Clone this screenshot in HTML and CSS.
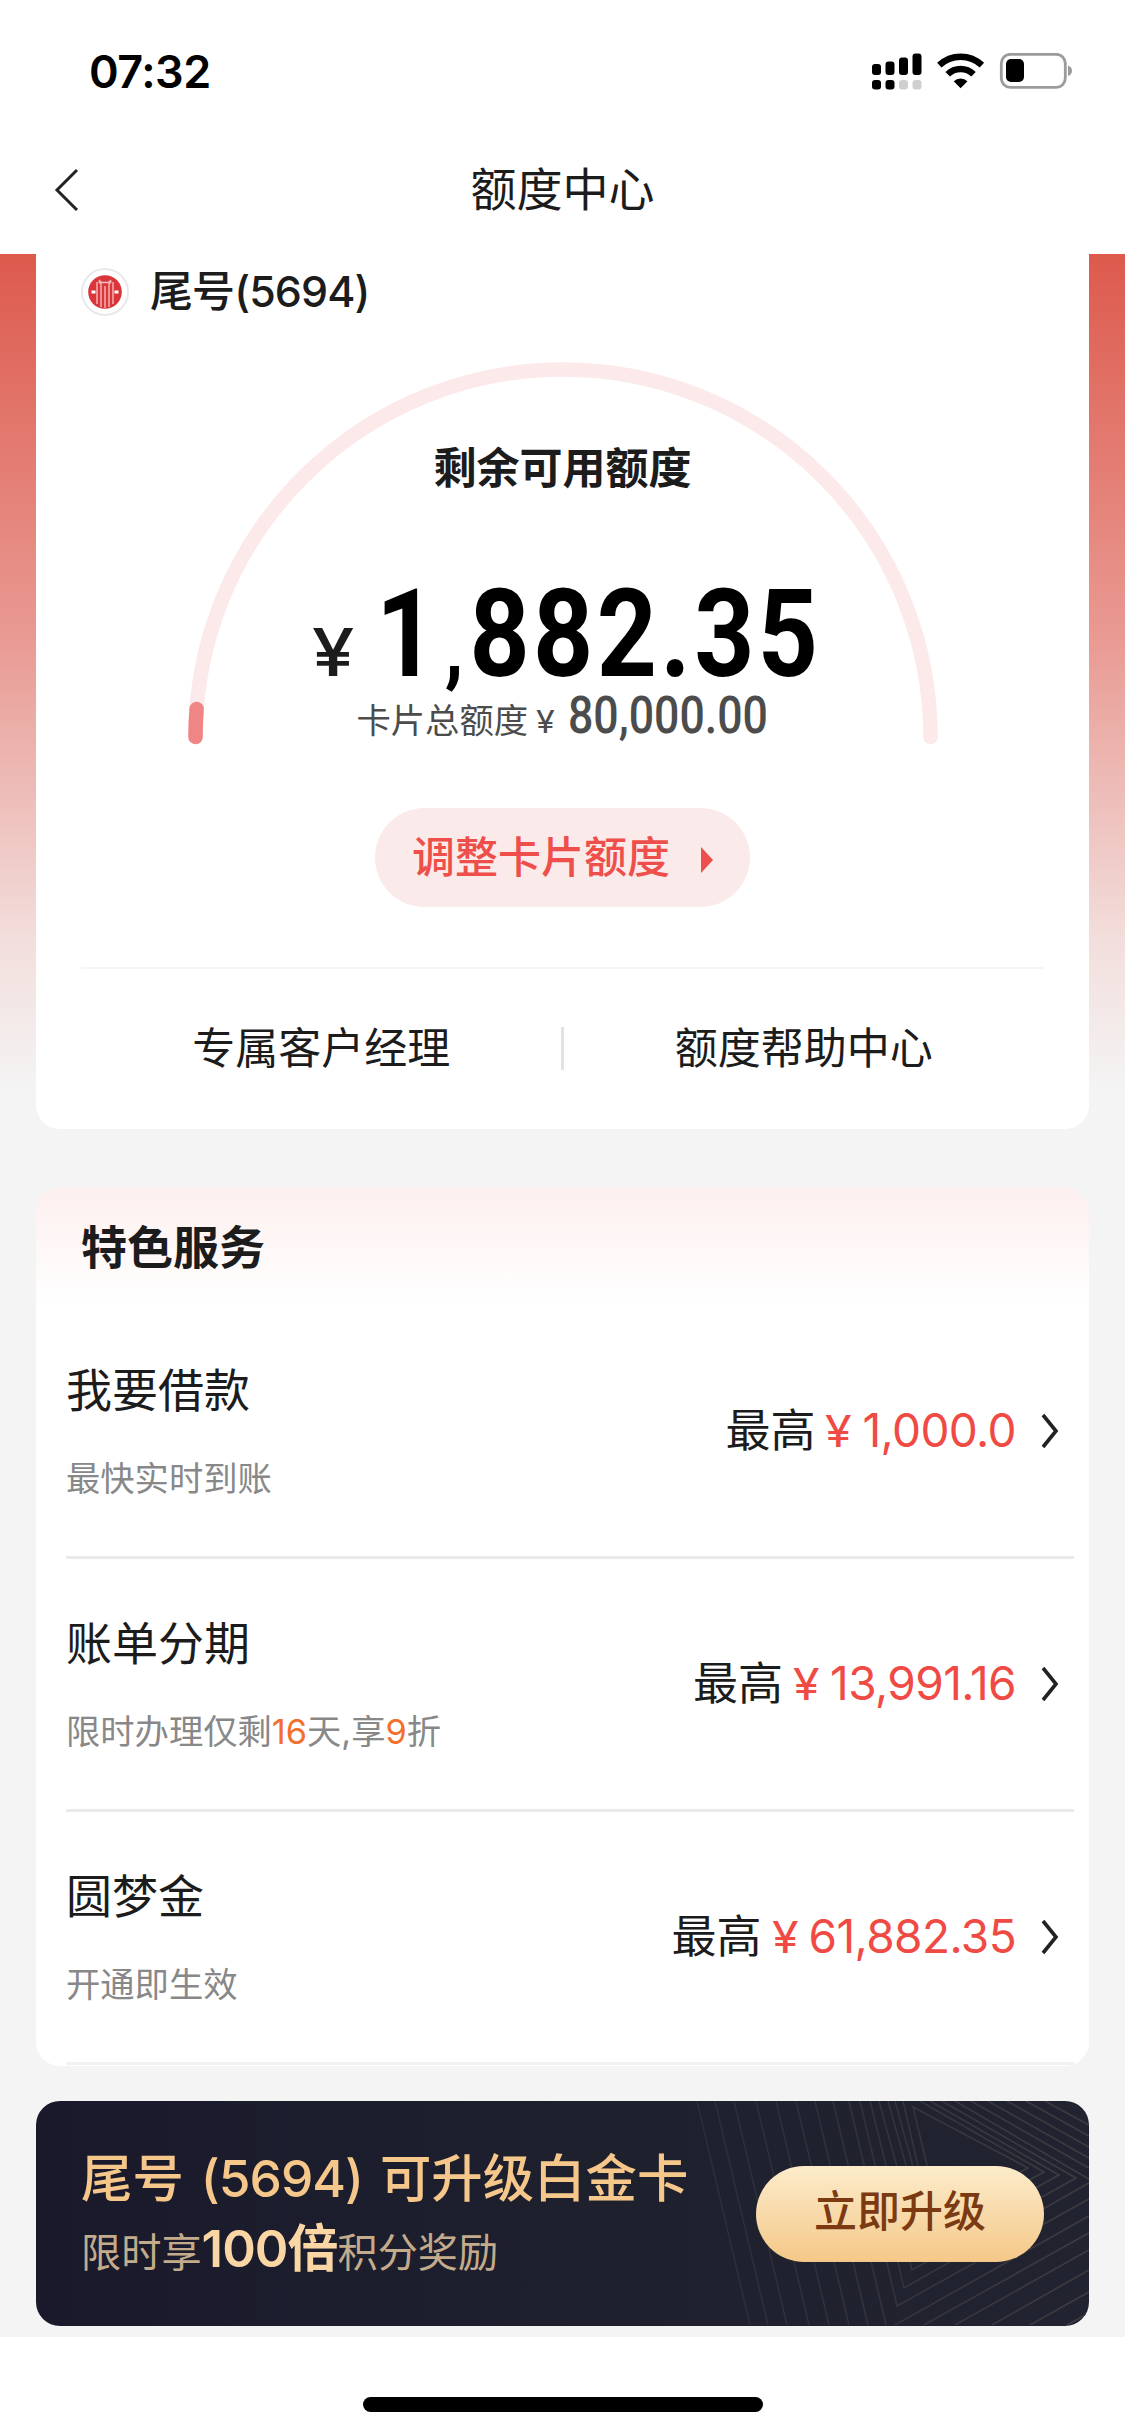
FILE: index.html
```html
<!DOCTYPE html>
<html lang="zh-CN">
<head>
<meta charset="utf-8">
<title>额度中心</title>
<link rel="stylesheet" href="styles.css">
</head>
<body>
<header class="top">
  <div class="status">
    <span class="time">07:32</span>
    <svg class="status-icons" width="204" height="40" viewBox="0 0 204 40">
      <rect x="0" y="11" width="9" height="11" rx="3"/><rect x="13.500" y="8.500" width="9" height="13.500" rx="3"/><rect x="27" y="4.500" width="9" height="17.500" rx="3"/><rect x="40.500" y="0.500" width="9" height="21.500" rx="3"/>
      <rect x="0" y="27" width="9" height="9.500" rx="3"/><rect x="13.500" y="27" width="9" height="9.500" rx="3"/>
      <rect x="27" y="27" width="9" height="9.500" rx="3" fill="#cfcfcf"/><rect x="40.500" y="27" width="9" height="9.500" rx="3" fill="#cfcfcf"/>
      <g fill="none" stroke="#000" stroke-width="6.400"><path d="M67.300 12.200a31 31 0 0 1 42.600 0"/><path d="M75.700 21.300a18.500 18.500 0 0 1 25.800 0"/></g>
      <path d="M88.600 35.200l-6.900-7a10 10 0 0 1 13.800 0z"/>
      <rect x="129.300" y="1.300" width="64" height="33" rx="9" fill="none" stroke="#9b9b9b" stroke-width="2.800"/>
      <rect x="134" y="6" width="18" height="23" rx="5"/>
      <path d="M196 12.500q4 1.500 4 5.300t-4 5.300z" fill="#9b9b9b"/>
    </svg>
  </div>
  <div class="navbar">
    <svg class="back" width="26" height="44" viewBox="0 0 26 44"><path d="M23 2L3 22L23 42" fill="none" stroke="#222" stroke-width="3"/></svg>
    <h1>额度中心</h1>
  </div>
</header>

<main>
  <section class="card quota">
    <div class="account">
      <svg width="48" height="48" viewBox="0 0 48 48">
        <circle cx="24" cy="24" r="23" fill="#fff" stroke="#e9e9e9" stroke-width="2"/>
        <circle cx="24" cy="24" r="16.800" fill="#d9353a"/>
        <g fill="none" stroke="#f6c4c4" stroke-width="1.300"><path d="M20 39V16l-2.500-2.500M28 39V16l2.500-2.500M24 40V18M16 36V14M32 36V14"/><path d="M18 12l2.500 2.500h7L30 12"/></g>
        <path d="M10.500 24h4M33.500 24h4" stroke="#fff" stroke-width="3"/>
      </svg>
      <span>尾号(5694)</span>
    </div>
    <div class="gauge">
      <svg class="arc" width="752" height="384" viewBox="0 0 752 384">
        <g fill="none" stroke-width="14.500" stroke-linecap="round">
          <path d="M8.500 376a367.500 367.500 0 0 1 735 0" stroke="#fceaea"/>
          <path d="M8.500 376a367.500 367.500 0 0 1 1.100-28" stroke="#ef8585"/>
        </g>
      </svg>
      <div class="gauge-title">剩余可用额度</div>
      <div class="remain"><span class="yen">¥</span><span class="din">1<i>,</i>882.35</span></div>
      <div class="total"><span>卡片总额度</span><span class="yen">¥</span><span class="din">80,000.00</span></div>
    </div>
    <div class="adjust"><span>调整卡片额度</span><svg width="12" height="26" viewBox="0 0 12 26"><path d="M0 0v26L12 13z" fill="#ee4f4a"/></svg></div>
    <nav class="links"><a>专属客户经理</a><b></b><a>额度帮助中心</a></nav>
  </section>

  <section class="card services">
    <h2>特色服务</h2>
    <div class="row">
      <div class="info"><h3>我要借款</h3><p>最快实时到账</p></div>
      <div class="max"><span>最高</span><em class="yen">¥</em><em>1,000.0</em></div>
      <svg width="20" height="36" viewBox="0 0 20 36"><path d="M3 2L16 18L3 34" fill="none" stroke="#222" stroke-width="3.600"/></svg>
    </div>
    <div class="row">
      <div class="info"><h3>账单分期</h3><p>限时办理仅剩<mark>16</mark>天,享<mark>9</mark>折</p></div>
      <div class="max"><span>最高</span><em class="yen">¥</em><em>13,991.16</em></div>
      <svg width="20" height="36" viewBox="0 0 20 36"><path d="M3 2L16 18L3 34" fill="none" stroke="#222" stroke-width="3.600"/></svg>
    </div>
    <div class="row">
      <div class="info"><h3>圆梦金</h3><p>开通即生效</p></div>
      <div class="max"><span>最高</span><em class="yen">¥</em><em>61,882.35</em></div>
      <svg width="20" height="36" viewBox="0 0 20 36"><path d="M3 2L16 18L3 34" fill="none" stroke="#222" stroke-width="3.600"/></svg>
    </div>
  </section>

  <section class="banner">
    <svg class="rays" width="1053" height="224" viewBox="0 0 1053 224">
      <defs><linearGradient id="fade" gradientUnits="userSpaceOnUse" x1="650" y1="0" x2="1053" y2="0"><stop offset="0" stop-color="#2a2c3a"/><stop offset=".55" stop-color="#35343d"/><stop offset="1" stop-color="#403d40"/></linearGradient></defs>
      <g fill="none" stroke="url(#fade)" stroke-width="1.500">
        <path d="M661 0l53 224M679 0l53 224M698 0l53 224M720 0l53 224M740 0l53 224M760 0l53 224M779 0l53 224M797 0l53 224"/>
        <path d="M813 0L861 205L1053 98M824 0L868 187L1053 82M834 0L876 169L1040 77L906 0M843 0L884 151L1023 74L894 0M852 0L890 135L1008 71L884 0M859 0L892 120L992 67L877 6L914 160M867 0L904 160"/>
        <path d="M919 0L1053 78M935 0L1053 67M952 0L1053 57M971 0L1053 46M990 0L1053 35M1009 0L1053 24"/>
        <path d="M859 224L1053 115M888 224L1053 132M919 224L1053 149M956 224L1053 169M994 224L1053 191M1031 224L1053 212"/>
      </g>
    </svg>
    <div class="copy">
      <div class="line1"><span>尾号</span><span class="num">(5694)</span><span>可升级白金卡</span></div>
      <div class="line2">限时享<strong>100倍</strong>积分奖励</div>
    </div>
    <div class="upgrade">立即升级</div>
  </section>
</main>
<footer><div class="home"></div></footer>
</body>
</html>
```
FILE: styles.css
```css
* { box-sizing: border-box; margin: 0; padding: 0; }
body {
  width: 1125px; height: 2435px; overflow: hidden;
  display: flex; flex-direction: column;
  background: #fff; color: #1c1c1c;
  font-family: Inter, "Noto Sans CJK SC", sans-serif;
  font-size: 43px; line-height: 1;
}
em, i { font-style: normal; }
svg { display: block; flex: none; }

.top { height: 254px; display: flex; flex-direction: column; }
.status { height: 126px; display: flex; justify-content: space-between; padding: 50px 49px 0 89px; }
.time { font-size: 45px; line-height: 44px; font-weight: 600; color: #000; letter-spacing: -.5px; }
.status-icons { margin-top: 3px; }
.navbar { height: 126px; display: grid; grid-template-columns: 200px 1fr 200px; align-items: center; }
.back { margin: 2px 0 0 54px; }
.navbar h1 { font-size: 46px; font-weight: 400; text-align: center; }

main {
  height: 2083px; padding: 0 36px; display: flex; flex-direction: column;
  background: linear-gradient(#dd5a4d 0, #e99b94 390px, #f2dfdd 690px, #f4f4f4 835px, #f4f4f4);
}
.card { background: #fff; }
.quota { height: 875px; border-radius: 0 0 24px 24px; display: flex; flex-direction: column; align-items: center; }
.account { align-self: stretch; display: flex; align-items: center; gap: 21px; height: 76px; padding-left: 45px; font-size: 43px; font-weight: 500; letter-spacing: -.9px; }
.account span { padding-bottom: 2px; }
.gauge { position: relative; width: 752px; height: 478px; display: flex; flex-direction: column; align-items: center; }
.arc { position: absolute; left: 0; top: 31px; }
.gauge-title { margin-top: 115px; line-height: 46px; font-weight: 600; }
.din { flex: none; font-family: Roboto, sans-serif; transform-origin: left; white-space: nowrap; }
.remain { width: 520px; margin-top: 86px; height: 116px; display: flex; align-items: baseline; color: #000; padding-left: 9px; }
.remain .yen { flex: none; width: 64px; font-size: 66px; font-weight: 500; transform: scaleX(1.15); transform-origin: left; color: #1c1c1c; }
.remain .din { font-size: 122px; line-height: 116px; font-weight: 700; transform: scaleX(.86); letter-spacing: 4px; }
.remain i { font-size: 88px; line-height: 1; margin: 0 3px 0 6px; }
.total { width: 420px; height: 46px; display: flex; align-items: baseline; font-size: 34.300px; color: #4c4c4c; padding-left: 4px; }
.total span { flex: none; white-space: nowrap; }
.total .yen { width: 32px; margin-left: 8px; font-size: 31px; transform: scaleX(1.1); transform-origin: left; }
.total .din { font-size: 51px; line-height: 46px; font-weight: 500; transform: scaleX(.875); }
.adjust { width: 375px; height: 99px; border-radius: 50px; background: #fbeaea; color: #ee4f4a; font-weight: 500; display: flex; align-items: center; padding-left: 37px; gap: 31px; }
.adjust svg { margin-top: 4px; }
.links { width: 963px; margin-top: 60px; border-top: 2px solid #f5f5f5; height: 160px; display: grid; grid-template-columns: 1fr 2px 1fr; align-items: center; text-align: center; }
.links b { height: 43px; margin-left: -1px; background: #e3e3e3; }

.services { margin-top: 59px; height: 878px; border-radius: 24px; background: linear-gradient(#fdefef, #fff 115px); padding: 0 15px 0 30px; }
.services h2 { height: 114px; padding-left: 15px; font-size: 46px; line-height: 118px; font-weight: 700; }
.row { height: 253px; display: flex; align-items: center; border-bottom: 3px solid #eaeaea; }
.services .row:nth-child(2) { height: 257px; padding-top: 4px; }
.row:last-child { border-color: #f1f1f1; }
.info { flex: 1; padding-top: 1px; }
.row h3 { font-size: 46px; font-weight: 400; line-height: 50px; }
.row p { font-size: 34.300px; line-height: 40px; margin-top: 44px; color: #888; }
mark { background: none; color: #f3702c; }
.max { display: flex; align-items: baseline; font-size: 45px; padding-bottom: 2px; }
.max em { color: #f04a44; font-size: 46px; letter-spacing: -.600px; }
.max .yen { width: 37px; margin-left: 10px; font-size: 44px; transform: scaleX(1.1); transform-origin: left; }
.row svg { margin: 0 14px 0 24px; }

.banner { position: relative; margin-top: 35px; height: 225px; border-radius: 24px; overflow: hidden; background: linear-gradient(90deg, #19192b, #1e202e 50%, #222331); display: flex; align-items: center; justify-content: space-between; padding: 0 45px; }
.rays { position: absolute; left: 0; top: 0; }
.copy { position: relative; padding-top: 4px; }
.line1 { display: flex; font-size: 51.400px; line-height: 60px; font-weight: 500; color: #f6c78a; }
.line1 .num { margin: 0 17px; letter-spacing: -1px; }
.line2 { margin-top: 11px; font-size: 40.200px; line-height: 60px; font-weight: 400; color: #c4ab8b; white-space: nowrap; }
.line2 strong { font-size: 51px; font-weight: 600; color: #fad6a5; letter-spacing: -1px; }
.upgrade { position: relative; width: 288px; height: 96px; border-radius: 48px; background: linear-gradient(#fceccb, #f5c888); color: #7b3a12; font-weight: 500; line-height: 90px; text-align: center; }
footer { height: 98px; display: flex; justify-content: center; padding-top: 60px; }
.home { width: 400px; height: 15px; border-radius: 8px; background: #000; }
```
